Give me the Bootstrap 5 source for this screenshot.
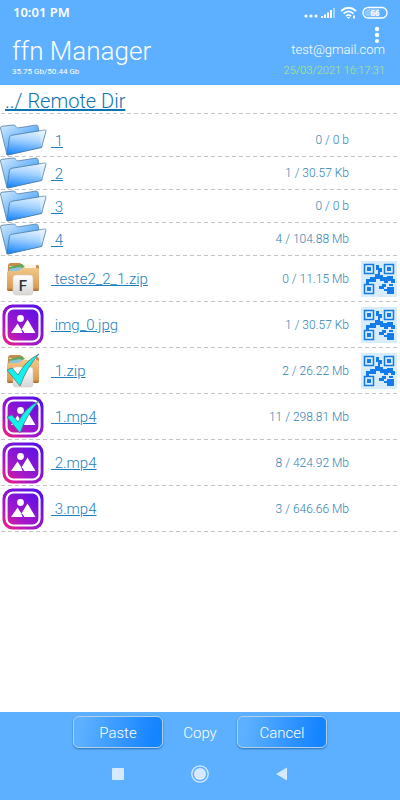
<!DOCTYPE html>
<html lang="en">
<head>
<meta charset="utf-8">
<meta name="viewport" content="width=device-width, initial-scale=1">
<title>ffn Manager</title>
<link href="https://cdn.jsdelivr.net/npm/bootstrap@5.3.0/dist/css/bootstrap.min.css" rel="stylesheet">
<style>
body { font-family: Roboto, "Liberation Sans", sans-serif; font-weight: 300; color: #2f83b5; background: #fff; }
a, a:hover { color: #1c7fbd; }
svg { display: block; flex: none; }
.bar { background: #5db0ff; color: #fff; }
.status { height: 25px; padding: 0 12px 0 13px; font: 600 13px/25px "Noto Sans", sans-serif; }
.app-head { height: 60px; padding: 0 15px 0 12px; }
.app-title { font-size: 26px; line-height: 30px; font-weight: 300; padding-top: 11px; }
.storage { font-size: 8px; line-height: 10px; font-weight: 400; padding-top: 1px; }
.menu-btn { width: 16px; height: 18px; line-height: 0; }
.account { font-size: 13px; line-height: 14px; }
.stamp { font-size: 11px; line-height: 14px; color: #b4e67c; margin-top: 7px; }
.path { height: 28px; padding: 0 5px; font-size: 20px; line-height: 32px; }
.path a { color: #0d74b3; }
.dash { height: 1px; background: repeating-linear-gradient(90deg, transparent 0 1px, #c4c4c4 1px 5px, transparent 5px 7px); }
.entry { height: 45px; font-size: 15px; }
.entry.folder { height: 32px; }
.entry.first { height: 42px; padding-top: 10px; }
.entry a { padding-top: 2px; }
.thumb { width: 51px; }
.thumb.media { padding-left: 2px; }
.thumb.zip { padding-left: 6px; }
.info { font-size: 12px; padding-right: 12px; }
.code { width: 39px; }
.actions { padding: 4px 0 0; gap: 20px; font-size: 15px; }
.action { width: 90px; height: 32px; padding: 2px 0 0; font-size: 15px; line-height: 26px; font-weight: 300; color: #fff; border: 1px solid #b4cfe8; border-radius: 6px; background: linear-gradient(100deg, #5db0ff 10%, #1584ff 90%); box-shadow: 0 1px 2px #2870b5; }
.action:hover { color: #fff; border-color: #fff; }
.copy { width: 34px; padding-top: 2px; }
.sysnav { height: 52px; gap: 62px; }
.sysnav button { width: 20px; height: 20px; }
</style>
<script src="https://cdn.jsdelivr.net/npm/bootstrap@5.3.0/dist/js/bootstrap.bundle.min.js"></script>
</head>
<body class="d-flex flex-column min-vh-100">
<svg width="0" height="0" class="position-absolute" aria-hidden="true">
  <defs>
    <linearGradient id="fb" x1="0" y1="0" x2="1" y2="1"><stop stop-color="#d5ebff"/><stop offset=".5" stop-color="#6ab4fb"/><stop offset="1" stop-color="#3d91f0"/></linearGradient>
    <linearGradient id="ff" x1=".6" y1="0" x2=".4" y2="1"><stop stop-color="#e4f2ff"/><stop offset=".4" stop-color="#a8d4ff"/><stop offset="1" stop-color="#2089ff"/></linearGradient>
    <linearGradient id="mg" x1="0" y1="1" x2=".8" y2="0"><stop stop-color="#ff1c78"/><stop offset=".35" stop-color="#a619c8"/><stop offset="1" stop-color="#5710e8"/></linearGradient>
    <linearGradient id="zg" x1="0" y1="0" x2="0" y2="1"><stop stop-color="#f2c88a"/><stop offset=".85" stop-color="#dc9b52"/><stop offset="1" stop-color="#a8652b"/></linearGradient>
    <linearGradient id="pg" x1="0" y1="0" x2="0" y2="1"><stop stop-color="#fff"/><stop offset="1" stop-color="#d6d6d6"/></linearGradient>
  </defs>
  <symbol id="folder" viewBox="0 0 47 32">
    <path d="M.5 4Q.5 2.500 2 2.300L13 1Q15 .8 16 2.500L17.500 4 36 1Q37.500 1 38 2.500L42 23 7 31Z" fill="url(#fb)" stroke="#557f9f" stroke-width=".8"/>
    <path d="M9.500 13Q10 11.500 12 11.200L45 6Q46.300 6 45.900 7.500L41.500 23.500 8 31Q7 31 7 30Z" fill="url(#ff)" stroke="#47799f" stroke-width=".8"/>
    <path d="M39 7 45.500 6 41.500 23Z" fill="#eaf6ff" opacity=".45"/>
  </symbol>
  <symbol id="media" viewBox="0 0 42 42">
    <rect x=".5" y=".5" width="41" height="41" rx="10" fill="url(#mg)"/>
    <rect x="4.500" y="4.500" width="33" height="33" rx="7" fill="none" stroke="#fff" stroke-width="2.200"/>
    <circle cx="18.500" cy="14.500" r="3.400" fill="#fff"/>
    <path d="M9 29 15.500 19.500 19.500 25.500 25.500 15.500 33.500 29H22L19.500 25.500 20.500 29Z" fill="#fff"/>
    <path d="M19.500 25.500 22 29" stroke="#7415cf" stroke-width="1"/>
  </symbol>
  <symbol id="zipbox" viewBox="0 0 34 36">
    <path d="M2 5Q2 2 5 2H14L17 4H31Q33 4 33 6V28Q33 30 31 30H3Q1 30 1 28Z" fill="#c98b4d"/>
    <path d="M3 5H15L18 3 30 4V10H3Z" fill="#fff7e5"/>
    <path d="M3 6 16 3 19 6 11 9H3Z" fill="#65a65b"/><path d="M3 8 14 6 18 8 12 11H3Z" fill="#8dc4df"/>
    <path d="M1 12Q1 10 3 10H12L17 7H31Q33 7 33 9V28Q33 30 31 30H3Q1 30 1 28Z" fill="url(#zg)"/>
    <rect x="7" y="14" width="20" height="20" rx="3" fill="url(#pg)" stroke="#d4cbc0" stroke-width=".6"/>
  </symbol>
  <symbol id="tick" viewBox="0 0 34 34">
    <path d="M1 17 6 15 12 22Q19 8 33 1 21 14 14 33Z" fill="#13f1ed" stroke="#53777c" stroke-width=".8"/>
  </symbol>
  <symbol id="qr" viewBox="0 0 36 36">
    <path fill="#d9ecfc" d="M0 0h36v36H0z"/>
    <g fill="none" stroke="#127be4" stroke-width="1.500"><path d="M3.500 3.500h9v9h-9zM23.500 3.500h9v9h-9zM3.500 23.500h9v9h-9z"/></g>
    <path fill="#127dea" d="M6 6h4v4H6zM26 6h4v4h-4zM6 26h4v4H6zM15 4h3v3h3v4h-2v3h3v2h4v-1h6v3h2v4h-4v-2h-3v2h-4v-2h-4v-2h-4v3H8v2H5v-5h4v-2h5v-3h3V9h-2zM26 26h7v7h-7v-3h-3v-2h3zM18 25h3v-2h4v3h-2v2h-5zM28 23h4v2h-4z"/>
  </symbol>
</svg>

<header class="bar">
  <div class="status d-flex align-items-center justify-content-between">
    <span>10:01 PM</span>
    <svg width="85" height="16" viewBox="0 0 85 16" aria-label="Signal, Wi-Fi, battery 66">
      <g fill="#fff"><circle cx="3" cy="11" r="1.600"/><circle cx="8" cy="11" r="1.600"/><circle cx="13" cy="11" r="1.600"/>
      <path d="M18 11h2v2h-2zM21 9.500h2V13h-2zM24 7.500h2V13h-2zM27 5h2v8h-2z"/><path opacity=".45" d="M30 3h2v10h-2z"/></g>
      <g fill="none" stroke="#fff" stroke-width="1.700"><path d="M38 6Q45.500 -.5 53 6M40.500 8.700Q45.500 4.200 50.500 8.700M43 11.200Q45.500 8.700 48 11.200"/><rect x="60" y="2.500" width="24" height="10.500" rx="5" stroke-width="1.300"/></g>
      <path fill="#fff" d="M43.800 12h3.400l-1.700 2zM50 10.500h2v3h-2z"/><path fill="#fff" opacity=".3" d="M65 4h11v7.500H65q-3.500-.5-3.500-3.700T65 4z"/>
      <text x="72" y="11" text-anchor="middle" font-family="Noto Sans, sans-serif" font-size="8" font-weight="700" fill="#fff">66</text>
    </svg>
  </div>
  <div class="app-head d-flex justify-content-between">
    <div><h1 class="app-title m-0">ffn Manager</h1><div class="storage">35.75 Gb/50.44 Gb</div></div>
    <div class="d-flex flex-column align-items-end">
      <button type="button" class="menu-btn btn p-0 border-0" aria-label="Menu"><svg width="16" height="18" viewBox="0 0 16 18" fill="#fff"><circle cx="8" cy="4" r="2.200"/><circle cx="8" cy="10" r="2.200"/><circle cx="8" cy="16" r="2"/></svg></button>
      <span class="account">test@gmail.com</span><span class="stamp">25/03/2021 16:17:31</span>
    </div>
  </div>
</header>

<main class="flex-grow-1">
  <div class="path"><a href="#">../ Remote Dir</a></div>
  <div class="dash"></div>
  <div class="entry folder first d-flex align-items-center"><span class="thumb"><svg width="47" height="32"><use href="#folder"/></svg></span><a href="#">&nbsp;1</a><span class="info ms-auto">0 / 0 b</span><span class="code"></span></div>
  <div class="dash"></div>
  <div class="entry folder d-flex align-items-center"><span class="thumb"><svg width="47" height="32"><use href="#folder"/></svg></span><a href="#">&nbsp;2</a><span class="info ms-auto">1 / 30.57 Kb</span><span class="code"></span></div>
  <div class="dash"></div>
  <div class="entry folder d-flex align-items-center"><span class="thumb"><svg width="47" height="32"><use href="#folder"/></svg></span><a href="#">&nbsp;3</a><span class="info ms-auto">0 / 0 b</span><span class="code"></span></div>
  <div class="dash"></div>
  <div class="entry folder d-flex align-items-center"><span class="thumb"><svg width="47" height="32"><use href="#folder"/></svg></span><a href="#">&nbsp;4</a><span class="info ms-auto">4 / 104.88 Mb</span><span class="code"></span></div>
  <div class="dash"></div>
  <div class="entry d-flex align-items-center"><span class="thumb zip"><svg width="34" height="36" viewBox="0 0 34 36"><use href="#zipbox"/><text x="17" y="30" text-anchor="middle" font-family="Roboto, sans-serif" font-size="15" font-weight="500" fill="#333">F</text></svg></span><a href="#">&nbsp;teste2_2_1.zip</a><span class="info ms-auto">0 / 11.15 Mb</span><span class="code"><svg width="36" height="36"><use href="#qr"/></svg></span></div>
  <div class="dash"></div>
  <div class="entry d-flex align-items-center"><span class="thumb media"><svg width="42" height="42"><use href="#media"/></svg></span><a href="#">&nbsp;img_0.jpg</a><span class="info ms-auto">1 / 30.57 Kb</span><span class="code"><svg width="36" height="36"><use href="#qr"/></svg></span></div>
  <div class="dash"></div>
  <div class="entry d-flex align-items-center"><span class="thumb zip"><svg width="34" height="36" viewBox="0 0 34 36"><use href="#zipbox"/><use href="#tick" width="34" height="34"/></svg></span><a href="#">&nbsp;1.zip</a><span class="info ms-auto">2 / 26.22 Mb</span><span class="code"><svg width="36" height="36"><use href="#qr"/></svg></span></div>
  <div class="dash"></div>
  <div class="entry d-flex align-items-center"><span class="thumb media"><svg width="42" height="42" viewBox="0 0 42 42"><use href="#media"/><use href="#tick" x="4" y="4" width="34" height="34"/></svg></span><a href="#">&nbsp;1.mp4</a><span class="info ms-auto">11 / 298.81 Mb</span><span class="code"></span></div>
  <div class="dash"></div>
  <div class="entry d-flex align-items-center"><span class="thumb media"><svg width="42" height="42"><use href="#media"/></svg></span><a href="#">&nbsp;2.mp4</a><span class="info ms-auto">8 / 424.92 Mb</span><span class="code"></span></div>
  <div class="dash"></div>
  <div class="entry d-flex align-items-center"><span class="thumb media"><svg width="42" height="42"><use href="#media"/></svg></span><a href="#">&nbsp;3.mp4</a><span class="info ms-auto">3 / 646.66 Mb</span><span class="code"></span></div>
  <div class="dash"></div>
</main>

<footer class="bar">
  <div class="actions d-flex justify-content-center align-items-center">
    <button type="button" class="btn action">Paste</button><span class="copy text-center">Copy</span><button type="button" class="btn action">Cancel</button>
  </div>
  <nav class="sysnav d-flex justify-content-center align-items-center" aria-label="System">
    <button type="button" class="btn p-0 border-0" aria-label="Recent"><svg width="20" height="20"><rect x="4" y="4" width="12" height="12" rx="1" fill="#d6eaff"/></svg></button>
    <button type="button" class="btn p-0 border-0" aria-label="Home"><svg width="20" height="20"><circle cx="10" cy="10" r="8.200" fill="none" stroke="#d6eaff" stroke-width="1.300"/><circle cx="10" cy="10" r="6" fill="#d6eaff"/></svg></button>
    <button type="button" class="btn p-0 border-0" aria-label="Back"><svg width="20" height="20"><path d="M4 10 15 3.500V16.500Z" fill="#d6eaff"/></svg></button>
  </nav>
</footer>
</body>
</html>
